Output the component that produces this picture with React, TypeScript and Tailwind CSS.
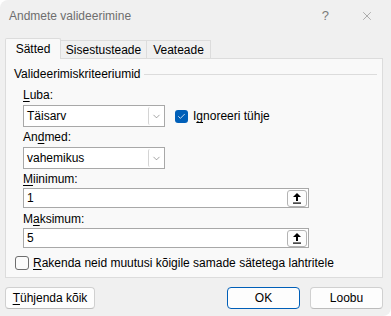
import { Check, ChevronDown, X } from "lucide-react";

const font = { fontFamily: '"Segoe UI", "Liberation Sans", sans-serif' };

function Select({ value }: { value: string }) {
  return (
    <div className="flex h-[22px] w-[142px] items-stretch border border-[#a8a8a8] bg-white">
      <div className="flex flex-1 items-center pl-[3px] text-[12px] text-black">{value}</div>
      <div className="m-[1px] flex w-[15px] items-center justify-center rounded-[2px] border-l border-[#d4d4d4]">
        <ChevronDown className="h-[11px] w-[11px] text-[#606060]" strokeWidth={1.25} />
      </div>
    </div>
  );
}

function RefInput({ value }: { value: string }) {
  return (
    <div className="flex h-[20px] w-[286px] items-center border border-[#a8a8a8] bg-white">
      <div className="flex-1 pl-[3px] text-[12px] text-black">{value}</div>
      <div className="mr-[1px] flex h-[17px] w-[20px] items-center justify-center rounded-[3px] border border-[#b4b4b4] bg-[#fdfdfd]">
        <svg width="10" height="12" viewBox="0 0 10 12">
          <path d="M5 1 L9 5 L6 5 L6 9 L4 9 L4 5 L1 5 Z" fill="#000" />
          <rect x="1" y="10.5" width="8" height="1.2" fill="#000" />
        </svg>
      </div>
    </div>
  );
}

function Label({ pre, u, post }: { pre: string; u: string; post: string }) {
  return (
    <div className="h-[16px] text-[12px] leading-[16px] text-black">
      {pre}
      <span className="underline underline-offset-2">{u}</span>
      {post}
    </div>
  );
}

function Btn({ children, primary }: { children: React.ReactNode; primary?: boolean }) {
  return (
    <button
      className={
        "flex h-[22px] items-center justify-center rounded-[4px] border bg-[#fdfdfd] text-[12px] text-black " +
        (primary ? "w-[73px] border-[#005fb8]" : "w-[73px] border-[#d0d0d0] border-b-[#bcbcbc]")
      }
    >
      {children}
    </button>
  );
}

export default function App() {
  return (
    <div className="h-[316px] w-[391px] bg-white" style={font}>
      <div className="flex h-full w-full flex-col rounded-tl-[8px] rounded-br-[8px] bg-[#f0f0f0]">
        <div className="flex h-[31px] items-center justify-between pl-[9px] pr-[17px] pt-[1px]">
          <span className="text-[12px] text-[#6e6e6e]">Andmete valideerimine</span>
          <div className="flex items-center gap-[31px] text-[#7a7a7a]">
            <span className="text-[13px]">?</span>
            <X className="h-[14px] w-[14px]" strokeWidth={1} />
          </div>
        </div>

        <div className="mt-[7px] flex items-end pl-[5px]">
          <div className="relative z-10 -mb-[1px] flex h-[21px] w-[56px] items-center justify-center rounded-t-[2px] border border-b-0 border-[#dcdcdc] bg-[#f9f9f9] text-[12px] text-black">
            Sätted
          </div>
          <div className="flex h-[18px] w-[86px] items-center justify-center border border-b-0 border-l-0 border-[#dcdcdc] text-[12px] text-black">
            Sisestusteade
          </div>
          <div className="flex h-[18px] w-[64px] items-center justify-center border border-b-0 border-l-0 border-[#dcdcdc] text-[12px] text-black">
            Veateade
          </div>
        </div>

        <div className="ml-[5px] flex h-[220px] w-[378px] flex-col border border-[#dcdcdc] bg-[#f9f9f9] pl-[8px] pt-[7px]">
          <div className="flex h-[16px] items-center gap-[4px] pr-[5px]">
            <span className="text-[12px] leading-[16px] text-black">Valideerimiskriteeriumid</span>
            <div className="h-px flex-1 bg-[#dcdcdc]" />
          </div>

          <div className="mt-[5px] flex flex-col pl-[9px]">
            <Label pre="" u="L" post="uba:" />
            <div className="mt-[2px] flex items-center gap-[10px]">
              <Select value="Täisarv" />
              <div className="flex items-center gap-[5px]">
                <div className="flex h-[13px] w-[13px] items-center justify-center rounded-[3px] bg-[#005fb8]">
                  <Check className="h-[9px] w-[9px] text-white" strokeWidth={2} />
                </div>
                <Label pre="I" u="g" post="noreeri tühje" />
              </div>
            </div>
            <div className="mt-[2px]">
              <Label pre="An" u="d" post="med:" />
            </div>
            <div className="mt-[2px]">
              <Select value="vahemikus" />
            </div>
            <div className="mt-[2px]">
              <Label pre="" u="M" post="iinimum:" />
            </div>
            <div className="mt-[1px]">
              <RefInput value="1" />
            </div>
            <div className="mt-[3px]">
              <Label pre="M" u="a" post="ksimum:" />
            </div>
            <div className="mt-[1px]">
              <RefInput value="5" />
            </div>
          </div>

          <div className="mt-[7px] flex items-center gap-[4px] pl-[1px]">
            <div className="h-[14px] w-[14px] rounded-[3px] border border-[#6e6e6e] bg-[#fbfbfb]" />
            <Label pre="" u="R" post="akenda neid muutusi kõigile samade sätetega lahtritele" />
          </div>
        </div>

        <div className="mt-[9px] flex items-center pl-[5px] pr-[8px]">
          <button className="flex h-[22px] w-[90px] items-center justify-center rounded-[4px] border border-[#d0d0d0] border-b-[#bcbcbc] bg-[#fdfdfd] text-[12px] text-black">
            <span className="underline underline-offset-2">T</span>ühjenda kõik
          </button>
          <div className="flex-1" />
          <div className="flex gap-[10px]">
            <Btn primary>OK</Btn>
            <Btn>Loobu</Btn>
          </div>
        </div>
      </div>
    </div>
  );
}
